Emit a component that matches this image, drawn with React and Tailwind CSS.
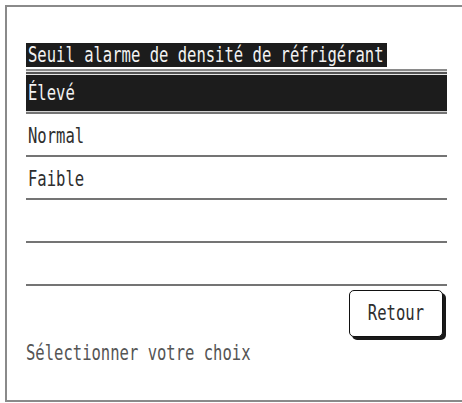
const FONT = { fontFamily: '"DejaVu Sans Mono", "Liberation Mono", monospace' };

function Txt({ children, className = "" }) {
    // condensed LCD style text
    return (
        <span className={"inline-block whitespace-pre text-[21px] leading-[21px] scale-x-[0.74] " + className}>
            {children}
        </span>
    );
}

function Row({ label }) {
    return (
        <>
            <div className="h-[41px] pt-[12px] pl-[2px]">
                {label && <Txt className="origin-left text-[#2e2e2e]">{label}</Txt>}
            </div>
            <div className="h-[2px] bg-[#747474]" />
        </>
    );
}

export default function App() {
    return (
        <div className="w-[462px] h-[403px] overflow-hidden bg-white pt-[5px] pl-[5px]" style={FONT}>
            <div className="w-[457px] h-[397px] border-t-2 border-l-2 border-b-2 border-[#8a8a8a] pt-[36px] pl-[19px]">
                <div className="w-[421px] flex flex-col">
                    {/* TITLE */}
                    <div className="w-[361px] h-[24px] bg-[#1c1c1c] pl-[2px] pt-[2px]">
                        <Txt className="origin-left text-[#f2f2f2]">Seuil alarme de densité de réfrigérant</Txt>
                    </div>
                    <div className="mt-[2px] h-[2px] bg-[#8a8a8a]" />
                    <div className="h-[1px] bg-[#e6e6e6]" />
                    <div className="h-[2px] bg-[#555]" />

                    {/* SELECTED */}
                    <div className="h-[37px] bg-[#1c1c1c] pt-[8px] pl-[2px] border-t border-[#e6e6e6]">
                        <Txt className="origin-left text-[#f2f2f2]">Élevé</Txt>
                    </div>
                    <div className="h-[1px] bg-[#d0d0d0]" />
                    <div className="h-[2px] bg-[#747474]" />

                    <Row label="Normal" />
                    <Row label="Faible" />
                    <Row label="" />
                    <Row label="" />

                    {/* ACTIONS */}
                    <button className="self-end mr-[4px] mt-[4px] w-[94px] h-[47px] rounded-[5px] border-[1.5px] border-[#111] bg-white shadow-[3px_3px_0_#1a1a1a] flex items-center justify-center">
                        <Txt className="origin-center text-[#2e2e2e]">Retour</Txt>
                    </button>

                    <div className="mt-[6px]">
                        <Txt className="origin-left text-[#555]">Sélectionner votre choix</Txt>
                    </div>
                </div>
            </div>
        </div>
    );
}
